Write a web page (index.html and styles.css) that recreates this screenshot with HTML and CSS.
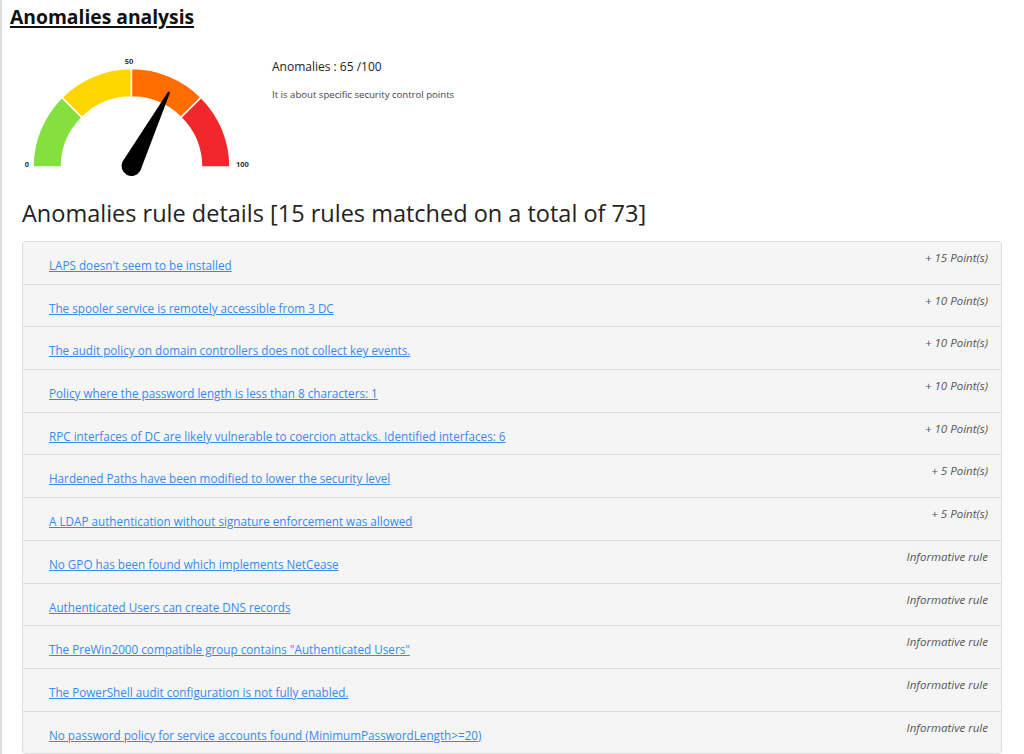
FILE: index.html
```html
<!DOCTYPE html>
<html lang="en">
<head>
<meta charset="utf-8">
<title>Anomalies analysis</title>
<link rel="stylesheet" href="styles.css">
</head>
<body>
<div class="page">
  <h1 class="title">Anomalies analysis</h1>
  <div class="summary">
    <svg class="gauge" width="260" height="140" viewBox="0 0 260 140">
      <g stroke="#ffffff" stroke-width="1.5" stroke-linejoin="miter">
        <path fill="#84e03f" d="M33 117 A98.5 98.5 0 0 1 61.85 47.35 L82 67.5 A70 70 0 0 0 61.5 117 Z"/>
        <path fill="#ffd600" d="M61.85 47.35 A98.5 98.5 0 0 1 131.5 18.5 L131.5 47 A70 70 0 0 0 82 67.5 Z"/>
        <path fill="#ff6d00" d="M131.5 18.5 A98.5 98.5 0 0 1 201.15 47.35 L181 67.5 A70 70 0 0 0 131.5 47 Z"/>
        <path fill="#f1282b" d="M201.15 47.35 A98.5 98.5 0 0 1 230 117 L201.5 117 A70 70 0 0 0 181 67.5 Z"/>
      </g>
      <g transform="translate(131.5 116) rotate(27)">
        <path fill="#000" d="M-10 0 L-1 -83 L1 -83 L10 0 A10 10 0 0 1 -10 0 Z"/>
      </g>
      <g class="gauge-labels">
        <text x="29" y="117" text-anchor="end">0</text>
        <text x="129" y="14" text-anchor="middle">50</text>
        <text x="236" y="117">100</text>
      </g>
    </svg>
    <div class="summary-text">
      <p class="score">Anomalies : 65 /100</p>
      <p class="desc">It is about specific security control points</p>
    </div>
  </div>
  <h2 class="section">Anomalies rule details [15 rules matched on a total of 73]</h2>
  <div class="rules">
    <div class="rule"><a href="#" class="rule-link">LAPS doesn't seem to be installed</a><span class="points">+ 15 Point(s)</span></div>
    <div class="rule"><a href="#" class="rule-link">The spooler service is remotely accessible from 3 DC</a><span class="points">+ 10 Point(s)</span></div>
    <div class="rule"><a href="#" class="rule-link">The audit policy on domain controllers does not collect key events.</a><span class="points">+ 10 Point(s)</span></div>
    <div class="rule"><a href="#" class="rule-link">Policy where the password length is less than 8 characters: 1</a><span class="points">+ 10 Point(s)</span></div>
    <div class="rule"><a href="#" class="rule-link">RPC interfaces of DC are likely vulnerable to coercion attacks. Identified interfaces: 6</a><span class="points">+ 10 Point(s)</span></div>
    <div class="rule"><a href="#" class="rule-link">Hardened Paths have been modified to lower the security level</a><span class="points">+ 5 Point(s)</span></div>
    <div class="rule"><a href="#" class="rule-link">A LDAP authentication without signature enforcement was allowed</a><span class="points">+ 5 Point(s)</span></div>
    <div class="rule"><a href="#" class="rule-link">No GPO has been found which implements NetCease</a><span class="points">Informative rule</span></div>
    <div class="rule"><a href="#" class="rule-link">Authenticated Users can create DNS records</a><span class="points">Informative rule</span></div>
    <div class="rule"><a href="#" class="rule-link">The PreWin2000 compatible group contains "Authenticated Users"</a><span class="points">Informative rule</span></div>
    <div class="rule"><a href="#" class="rule-link">The PowerShell audit configuration is not fully enabled.</a><span class="points">Informative rule</span></div>
    <div class="rule"><a href="#" class="rule-link">No password policy for service accounts found (MinimumPasswordLength&gt;=20)</a><span class="points">Informative rule</span></div>
  </div>
</div>
</body>
</html>
```
FILE: styles.css
```css
html, body {
  margin: 0;
  padding: 0;
  background: #ffffff;
}
body {
  font-family: "Open Sans", "Noto Sans", "Liberation Sans", sans-serif;
  color: #212529;
  border-left: 2px solid #dcdcdc;
  min-height: 100vh;
  box-sizing: border-box;
}
.page {
  padding: 0 22px 0 8px;
}
.title {
  margin: 0;
  padding-top: 3px;
  font-size: 19.3px;
  line-height: 28px;
  font-weight: 700;
  color: #111;
  text-decoration: underline;
  text-decoration-thickness: 2px;
  text-underline-offset: 2px;
}
.summary {
  display: flex;
  align-items: flex-start;
  margin-top: 19px;
  margin-left: -10px;
}
.gauge {
  display: block;
  flex: none;
}
.gauge-labels text {
  font-family: "Open Sans", "Liberation Sans", sans-serif;
  font-size: 7.5px;
  font-weight: 700;
  fill: #333;
}
.summary-text {
  padding-left: 12px;
  padding-top: 8px;
}
.score {
  margin: 0;
  font-size: 12px;
  line-height: 18px;
  color: #222;
}
.desc {
  margin: 12px 0 0;
  font-size: 9.6px;
  line-height: 14px;
  color: #444;
}
.section {
  margin: 7px 0 12px 12px;
  font-size: 23.5px;
  line-height: 32px;
  font-weight: 400;
  color: #222;
}
.rules {
  margin-left: 12px;
  border: 1px solid #dcdcdc;
  border-radius: 4px;
  background: #f5f5f5;
  overflow: hidden;
}
.rule {
  display: flex;
  justify-content: space-between;
  align-items: flex-start;
  padding: 14px 13px 9.7px 26px;
  border-bottom: 1px solid #dcdcdc;
}
.rule:last-child {
  border-bottom: none;
}
.rule-link {
  font-size: 11.7px;
  line-height: 18px;
  color: #3a88ee;
  text-decoration: underline;
}
.points {
  margin-top: -6px;
  font-size: 11.5px;
  line-height: 16px;
  font-style: italic;
  color: #555;
  white-space: nowrap;
}
```
